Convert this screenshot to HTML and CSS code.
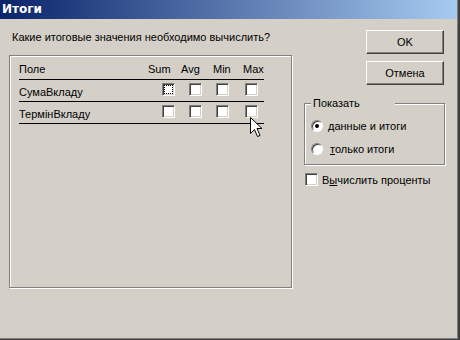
FILE: index.html
```html
<!DOCTYPE html>
<html lang="ru">
<head>
<meta charset="utf-8">
<title>Итоги</title>
<link rel="stylesheet" href="styles.css">
</head>
<body>
<div class="window">
  <div class="titlebar">Итоги</div>
  <div class="client">
    <div class="left">
      <p class="prompt">Какие итоговые значения необходимо вычислить?</p>
      <div class="panel">
        <div class="row head">
          <span class="name head-name">Поле</span>
          <span class="h h-sum">Sum</span>
          <span class="h h-avg">Avg</span>
          <span class="h h-min">Min</span>
          <span class="h h-max">Max</span>
        </div>
        <div class="row">
          <span class="name">СумаВкладу</span>
          <span class="cb focus"></span>
          <span class="cb"></span>
          <span class="cb"></span>
          <span class="cb last"></span>
        </div>
        <div class="row">
          <span class="name">ТермінВкладу</span>
          <span class="cb"></span>
          <span class="cb"></span>
          <span class="cb"></span>
          <span class="cb last"></span>
        </div>
      </div>
    </div>
    <div class="right">
      <div class="btn">OK</div>
      <div class="btn btn-gap">Отмена</div>
      <div class="group">
        <span class="legend">Показать</span>
        <div class="option first-opt"><span class="radio checked"></span><span class="label"><u>д</u>анные и итоги</span></div>
        <div class="option"><span class="radio"></span><span class="label label2"><u>т</u>олько итоги</span></div>
      </div>
      <div class="check-row"><span class="cb"></span><span class="label">В<u>ы</u>числить проценты</span></div>
    </div>
  </div>
  <svg class="cursor" width="13" height="21" viewBox="0 0 13 21">
    <polygon points="0.5,0.5 0.5,16.5 4.5,12.5 7.5,19.5 10,18.5 7,11.5 12,11.5" fill="#fff" stroke="#000" stroke-width="1" stroke-linejoin="miter"/>
  </svg>
</div>
</body>
</html>
```
FILE: styles.css
```css
html, body {
  margin: 0;
  padding: 0;
}
body {
  width: 460px;
  height: 340px;
  background: #404040;
  overflow: hidden;
  font-family: "Liberation Sans", Arial, sans-serif;
  font-size: 11px;
  color: #000;
}
.window {
  position: relative;
  width: 457px;
  height: 338px;
  background: #d4d0c8;
  border-right: 1px solid #808080;
  border-bottom: 1px solid #808080;
}
.titlebar {
  height: 19px;
  line-height: 19px;
  padding-left: 2px;
  background: linear-gradient(to right, #0a246a, #a6caf0);
  color: #fff;
  font-family: "DejaVu Sans", sans-serif;
  font-weight: bold;
  font-size: 12px;
}
.client {
  display: flex;
}
.left {
  width: 293px;
  padding-left: 9px;
  box-sizing: border-box;
}
.prompt {
  margin: 12px 0 0 3px;
  line-height: 13px;
  white-space: nowrap;
}
.panel {
  margin-top: 11px;
  width: 283px;
  height: 233px;
  box-sizing: border-box;
  border: 1px solid #808080;
  box-shadow: 1px 1px 0 #fff, inset 1px 1px 0 #fff;
  padding: 3px 0 0 9px;
}
.row {
  display: flex;
  align-items: center;
  width: 245px;
  height: 21px;
  border-bottom: 1px solid #000;
}
.row.head {
  height: 20px;
}
.name {
  width: 143px;
  flex: none;
  padding-top: 2px;
}
.head-name {
  width: 129px;
  padding-top: 0;
}
.h {
  flex: none;
}
.h-sum { width: 33px; }
.h-avg { width: 32px; }
.h-min { width: 30px; }
.h-max { width: 20px; }
.cb {
  flex: none;
  position: relative;
  width: 13px;
  height: 13px;
  box-sizing: border-box;
  border: 1px solid;
  border-color: #808080 #fff #fff #808080;
  box-shadow: inset 1px 1px 0 #404040, inset -1px -1px 0 #d4d0c8;
  background: #fff;
  margin-right: 14px;
  margin-top: -3px;
}
.cb.last {
  margin-left: 2px;
  margin-right: 0;
}
.cb.focus::after {
  content: "";
  position: absolute;
  left: 1px;
  top: 1px;
  width: 9px;
  height: 9px;
  box-sizing: border-box;
  border: 1px dotted #000;
}
.right {
  margin-left: 11px;
  width: 142px;
  padding-top: 11px;
}
.btn {
  margin-left: 62px;
  width: 78px;
  height: 24px;
  box-sizing: border-box;
  border: 1px solid;
  border-color: #fff #404040 #404040 #fff;
  box-shadow: inset -1px -1px 0 #808080;
  display: flex;
  align-items: center;
  justify-content: center;
}
.btn-gap {
  margin-top: 7px;
}
.group {
  margin-top: 18px;
  width: 141px;
  height: 62px;
  box-sizing: border-box;
  border: 1px solid #808080;
  box-shadow: 1px 1px 0 #fff, inset 1px 1px 0 #fff;
}
.legend {
  display: block;
  width: 82px;
  margin: -7px 0 0 6px;
  padding-left: 2px;
  line-height: 13px;
  background: #d4d0c8;
}
.option {
  display: flex;
  align-items: center;
  height: 13px;
  margin-top: 9px;
  padding-left: 6px;
}
.option + .option {
  margin-top: 10px;
}
.radio {
  position: relative;
  width: 12px;
  height: 12px;
  box-sizing: border-box;
  border-radius: 50%;
  border: 1px solid;
  border-color: #808080 #fff #fff #808080;
  box-shadow: inset 1px 1px 0 #404040;
  background: #fff;
  margin-right: 5px;
}
.radio.checked::after {
  content: "";
  position: absolute;
  left: 3px;
  top: 3px;
  width: 4px;
  height: 4px;
  border-radius: 50%;
  background: #000;
}
.label2 {
  padding-left: 2px;
}
.check-row {
  display: flex;
  align-items: center;
  margin-top: 8px;
  margin-left: 1px;
}
.check-row .cb {
  margin: 0 4px 0 0;
}
u {
  text-decoration: underline;
}
.cursor {
  position: absolute;
  left: 250px;
  top: 117px;
}
```
